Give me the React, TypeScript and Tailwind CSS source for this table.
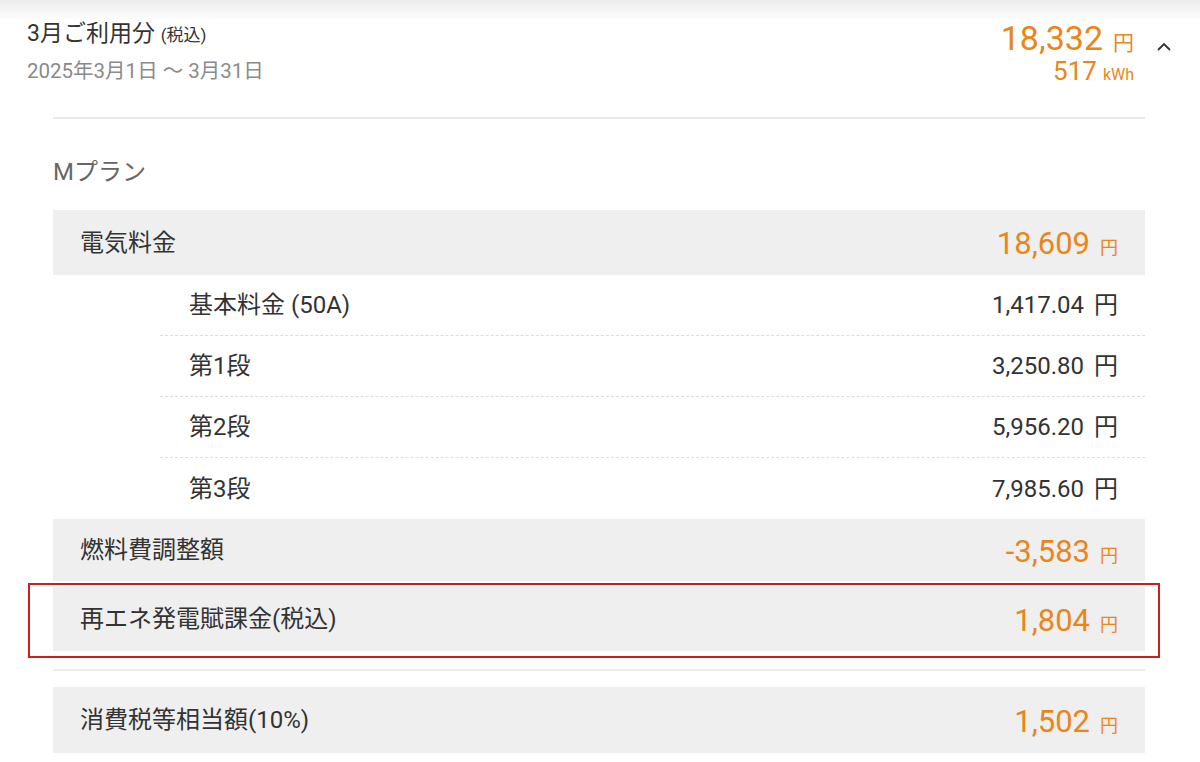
const font = "font-['Roboto','Noto_Sans_CJK_JP',sans-serif]";

type Sub = { label: string; value: string };

const subs: Sub[] = [
  { label: "基本料金 (50A)", value: "1,417.04" },
  { label: "第1段", value: "3,250.80" },
  { label: "第2段", value: "5,956.20" },
  { label: "第3段", value: "7,985.60" },
];

function GrayRow({ label, value, h = "h-[65px]" }: { label: string; value: string; h?: string }) {
  return (
    <div className={`flex items-center justify-between bg-[#efefef] pl-[27px] pr-[27px] ${h}`}>
      <span className="text-[24px] text-[#333]">{label}</span>
      <span className="text-[#e8861a] flex items-baseline gap-[10px] pt-[4px]">
        <span className="text-[31px]">{value}</span>
        <span className="text-[18px]">円</span>
      </span>
    </div>
  );
}

export default function App() {
  return (
    <main className={`${font} w-[1200px] h-[762px] bg-white overflow-hidden`}>
      <header className="bg-gradient-to-b from-[#ececec] via-white via-[18%] to-white pl-[27px] pr-[28px] pt-[18px] flex items-start justify-between h-[117px]">
        <div>
          <div className="text-[23px] text-[#333] leading-[32px]">
            3月ご利用分 <span className="text-[17px]">(税込)</span>
          </div>
          <div className="text-[20.5px] text-[#8a8a8a] mt-[6px] leading-[28px]">2025年3月1日 〜 3月31日</div>
        </div>
        <div className="flex items-start gap-[22px]">
          <div className="text-[#e8861a] flex flex-col items-end">
            <div className="flex items-baseline gap-[10px] leading-[40px]">
              <span className="text-[34px]">18,332</span>
              <span className="text-[21px]">円</span>
            </div>
            <div className="flex items-baseline gap-[6px] leading-[26px] -mt-[5px]">
              <span className="text-[26px]">517</span>
              <span className="text-[16px]">kWh</span>
            </div>
          </div>
          <svg width="16" height="12" viewBox="0 0 16 12" className="mt-[23px]">
            <path d="M2 9 L8 3 L14 9" fill="none" stroke="#333" strokeWidth="1.8" />
          </svg>
        </div>
      </header>

      <section className="mx-[53px] w-[1092px] border-t-2 border-[#e9e9e9]">
        <div className="text-[24px] text-[#666] h-[91px] flex items-center pt-[14px]">Mプラン</div>

        <GrayRow label="電気料金" value="18,609" />

        <div>
          {subs.map((s, i) => (
            <div
              key={s.label}
              className={`ml-[107px] h-[61px] flex items-center justify-between pr-[27px] ${
                i < subs.length - 1 ? "border-b border-dashed border-[#dcdcdc]" : ""
              }`}
            >
              <span className="pl-[29px] text-[24px] text-[#333]">{s.label}</span>
              <span className="text-[24px] text-[#333] flex items-baseline gap-[10px]">
                <span>{s.value}</span>
                <span>円</span>
              </span>
            </div>
          ))}
        </div>

        <GrayRow label="燃料費調整額" value="-3,583" h="h-[62px]" />

        <div className="relative mt-[6px]">
          <GrayRow label="再エネ発電賦課金(税込)" value="1,804" h="h-[64px]" />
          <div className="absolute -left-[25px] -right-[15px] -top-[4px] -bottom-[7px] border-2 border-[#cc1f1f]" />
        </div>

        <div className="mt-[18px] border-t-2 border-[#ececf0]" />

        <div className="mt-[16px]">
          <GrayRow label="消費税等相当額(10%)" value="1,502" h="h-[66px]" />
        </div>
      </section>
    </main>
  );
}
